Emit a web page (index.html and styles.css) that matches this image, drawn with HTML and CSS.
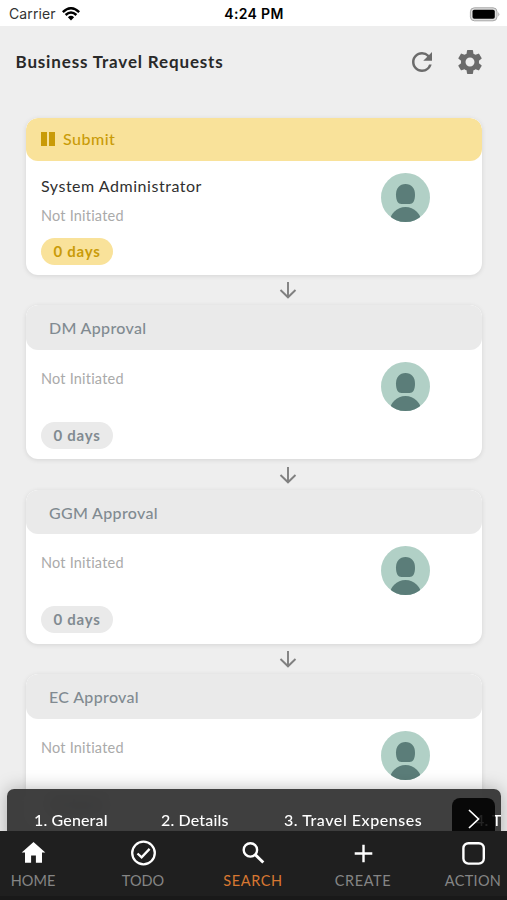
FILE: index.html
```html
<!DOCTYPE html>
<html lang="en">
<head>
<meta charset="utf-8">
<title>Business Travel Requests</title>
<link rel="stylesheet" href="styles.css">
</head>
<body>
<svg class="defs" aria-hidden="true">
  <symbol id="avatar" viewBox="0 0 49 49">
    <clipPath id="disc"><circle cx="24.5" cy="24.5" r="24.5"/></clipPath>
    <circle cx="24.5" cy="24.5" r="24.5" fill="#b1d0c6"/>
    <path d="M24.5 11C30.500 11 34 15.500 34 21.500C34 28 32 31 28.500 31H20.500C17 31 15 28 15 21.500C15 15.500 18.500 11 24.500 11Z" fill="#5b7d79"/>
    <circle cx="24.500" cy="50" r="16" fill="#5b7d79" clip-path="url(#disc)"/>
  </symbol>
  <symbol id="down" viewBox="0 0 18 18">
    <path d="M9 1V16M1.500 9L9 16.300L16.500 9" fill="none" stroke="#808080" stroke-width="1.900"/>
  </symbol>
</svg>
<div class="screen">
  <div class="status">
    <div class="carrier"><span>Carrier</span>
      <svg width="18" height="14" viewBox="0 0 18 14"><path d="M.8 5.200Q9-2.600 17.200 5.200M3.600 8Q9 3 14.400 8" fill="none" stroke="#000" stroke-width="2.500"/><path d="M5.900 10.300Q9 7.400 12.100 10.300L9 13.500Z"/></svg>
    </div>
    <div class="clock">4:24 PM</div>
    <svg class="battery" width="31" height="15" viewBox="0 0 31 15"><rect x="1.400" y=".8" width="26.600" height="13" rx="4" fill="#ddd" stroke="#a7a7a7" stroke-width="1"/><rect x="3.500" y="2.800" width="22.300" height="9" rx="1.800"/><path d="M29.300 5Q31.300 7.300 29.300 9.600Z" fill="#a7a7a7"/></svg>
  </div>
  <header class="title-bar">
    <h1>Business Travel Requests</h1>
    <svg class="refresh" width="30" height="30" viewBox="0 0 24 24"><path d="M17.650 6.350A7.958 7.958 0 0 0 12 4c-4.420 0-7.990 3.580-7.990 8s3.570 8 7.990 8c3.730 0 6.840-2.550 7.730-6h-2.080A5.990 5.990 0 0 1 12 18c-3.310 0-6-2.690-6-6s2.690-6 6-6c1.660 0 3.140.690 4.220 1.780L13 11h7V4z" fill="#6b6b6b"/></svg>
    <svg width="30" height="30" viewBox="0 0 24 24"><path d="M19.140 12.940c.040-.300.060-.610.060-.940 0-.320-.020-.640-.070-.940l2.030-1.580a.49.49 0 0 0 .120-.610l-1.920-3.320a.488.488 0 0 0-.590-.220l-2.390.960c-.500-.380-1.030-.700-1.620-.940l-.360-2.540a.484.484 0 0 0-.480-.410h-3.840c-.240 0-.430.170-.470.410l-.360 2.540c-.590.240-1.130.570-1.620.940l-2.390-.960c-.220-.080-.470 0-.590.220L2.740 8.870c-.120.210-.080.470.120.610l2.030 1.580c-.050.300-.090.630-.090.940s.020.640.070.940l-2.030 1.580a.49.49 0 0 0-.120.610l1.920 3.320c.120.220.370.290.590.220l2.390-.960c.500.380 1.030.700 1.620.940l.360 2.540c.050.240.240.410.480.410h3.840c.240 0 .440-.170.470-.410l.360-2.540c.590-.240 1.130-.560 1.620-.940l2.390.960c.220.080.470 0 .590-.220l1.920-3.320a.49.49 0 0 0-.120-.610zM12 15.600c-1.980 0-3.600-1.620-3.600-3.600s1.620-3.600 3.600-3.600 3.600 1.620 3.600 3.600-1.620 3.600-3.600 3.600" fill="#6b6b6b"/></svg>
  </header>
  <main class="flow">
    <section class="card current">
      <h2><i class="pause"></i><span>Submit</span></h2>
      <div class="content">
        <div class="info"><p class="person">System Administrator</p><p class="state">Not Initiated</p><span class="days">0 days</span></div>
        <svg class="avatar"><use href="#avatar"/></svg>
      </div>
    </section>
    <svg class="arrow"><use href="#down"/></svg>
    <section class="card">
      <h2>DM Approval</h2>
      <div class="content">
        <div class="info"><p class="state">Not Initiated</p><span class="days">0 days</span></div>
        <svg class="avatar"><use href="#avatar"/></svg>
      </div>
    </section>
    <svg class="arrow"><use href="#down"/></svg>
    <section class="card">
      <h2>GGM Approval</h2>
      <div class="content">
        <div class="info"><p class="state">Not Initiated</p><span class="days">0 days</span></div>
        <svg class="avatar"><use href="#avatar"/></svg>
      </div>
    </section>
    <svg class="arrow"><use href="#down"/></svg>
    <section class="card">
      <h2>EC Approval</h2>
      <div class="content">
        <div class="info"><p class="state">Not Initiated</p><span class="days">0 days</span></div>
        <svg class="avatar"><use href="#avatar"/></svg>
      </div>
    </section>
  </main>
  <div class="steps">
    <span class="general">1. General</span><span class="details">2. Details</span><span class="expenses">3. Travel Expenses</span><span>4. Travel</span>
    <div class="next"><svg width="12" height="20" viewBox="0 0 12 20"><path d="M1 1L10.500 10L1 19" fill="none" stroke="#fff" stroke-width="1.700"/></svg></div>
  </div>
  <nav class="tabs">
    <a><svg viewBox="0 0 26 26"><path d="M13.500 2L1.700 12.600H5V22.800H11.100V15.500H15.900V22.800H22V12.600H25.300Z" fill="#fff"/></svg><span class="short">HOME</span></a>
    <a><svg viewBox="0 0 26 26"><g fill="none" stroke="#fff" stroke-width="2.300"><circle cx="13.500" cy="13" r="11.300"/><path d="M7.500 13.500L11.600 17.400L19.600 8.900"/></g></svg><span class="short">TODO</span></a>
    <a class="on"><svg viewBox="0 0 26 26"><g fill="none" stroke="#fff"><circle cx="10.400" cy="9.900" r="6.700" stroke-width="2.400"/><path d="M15.200 14.600L23.300 22.500" stroke-width="2.900"/></g></svg><span>SEARCH</span></a>
    <a><svg viewBox="0 0 26 26"><path d="M13.500 4.700V22.300M4.700 13.500H22.300" fill="none" stroke="#fff" stroke-width="2.400"/></svg><span>CREATE</span></a>
    <a><svg viewBox="0 0 26 26"><rect x="3.400" y="3.200" width="20.400" height="20.400" rx="5" fill="none" stroke="#fff" stroke-width="2.400"/></svg><span class="action">ACTION</span></a>
  </nav>
</div>
</body>
</html>
```

FILE: styles.css
```css
* { box-sizing: border-box; }
body { margin: 0; font-family: Lato, "Open Sans", sans-serif; background: #eee; }
h1, h2, p { margin: 0; }
.defs { position: absolute; width: 0; height: 0; }
.screen { position: relative; width: 507px; height: 900px; overflow: hidden; background: #eee; }
.status { height: 26px; background: #fff; display: grid; grid-template-columns: 1fr auto 1fr; align-items: center; padding: 1px 7px 0 9px; font-family: Inter, sans-serif; font-size: 14px; line-height: 26px; }
.carrier { display: flex; align-items: center; gap: 6px; color: #333; letter-spacing: .1px; }
.clock { font-weight: 600; color: #000; letter-spacing: .35px; font-size: 14px; margin-right: 1px; }
.battery { justify-self: end; }
.title-bar { height: 92px; display: flex; align-items: flex-start; padding: 21px 22.500px 0 15.500px; }
h1 { flex: 1; font-size: 17px; line-height: 30px; font-weight: 700; color: #292929; letter-spacing: .84px; white-space: nowrap; }
.refresh { margin-right: 18px; }
.flow { padding: 0 25.500px 0 26px; }
.card { height: 154px; border-radius: 12px; background: #fff; box-shadow: 0 1px 5px rgba(0,0,0,.11); overflow: hidden; }
.card h2 { height: 44.500px; padding-left: 23px; border-radius: 12px; background: #eaeaea; color: #818a91; font-size: 16px; font-weight: 500; line-height: 46px; letter-spacing: .33px; }
.card.current { height: 156.500px; }
.card.current h2 { display: flex; align-items: center; height: 42.500px; padding-left: 15px; gap: 8px; color: #c99b08; background: #f9e29a; line-height: 42px; letter-spacing: .5px; }
.pause { width: 14px; height: 14px; border: solid #c99b08; border-width: 0 6px; }
.content { display: flex; justify-content: space-between; padding: 12px 51.500px 0 15px; }
.info { padding-top: 7px; }
.current .info { padding-top: 2px; }
.current .content { padding-top: 12.500px; }
.person { font-size: 16px; line-height: 22px; color: #303030; letter-spacing: .53px; }
.state { font-size: 14.500px; line-height: 20px; color: #aaa; letter-spacing: .2px; margin-bottom: 33px; }
.current .state { margin: 9px 0 11.500px; }
.days { display: block; width: 72px; height: 27px; border-radius: 14px; background: #eaeaea; color: #818a91; text-align: center; font-size: 15px; line-height: 27px; font-weight: 700; letter-spacing: .75px; }
.current .days { background: #f9e29a; color: #c99b08; }
.avatar { width: 49px; height: 49px; flex: none; }
.arrow { display: block; width: 18px; height: 18px; margin: 6.500px 0 6px 252.500px; }
.steps { position: absolute; left: 7px; top: 789px; width: 494px; height: 60px; border-radius: 7px; overflow: hidden; display: flex; padding: 19px 0 0 27px; background: rgba(48,48,48,.93); backdrop-filter: blur(7px); box-shadow: 0 0 18px rgba(0,0,0,.28); color: #fff; font-size: 16px; line-height: 23px; font-weight: 500; letter-spacing: .15px; white-space: nowrap; }
.steps span { flex: none; }
.general { width: 127px; }
.details { width: 123px; }
.expenses { width: 191px; letter-spacing: .55px; }
.next { position: absolute; left: 445px; top: 9px; width: 43px; height: 44px; border-radius: 8px; background: rgba(0,0,0,.86); }
.next svg { display: block; margin: 11px 0 0 16px; }
.tabs { position: absolute; left: -22px; bottom: 0; width: 550px; height: 69px; background: #1f1f1f; border-bottom: 4px solid #191919; display: flex; padding-top: 8.500px; }
.tabs a { width: 110px; display: flex; flex-direction: column; align-items: center; color: #858585; font-size: 14.500px; line-height: 20px; letter-spacing: .6px; }
.tabs svg { width: 26px; height: 26px; margin-bottom: 5px; }
.tabs .short { letter-spacing: 0; }
.tabs .action { letter-spacing: .3px; }
.tabs .on { color: #d77731; }
```
